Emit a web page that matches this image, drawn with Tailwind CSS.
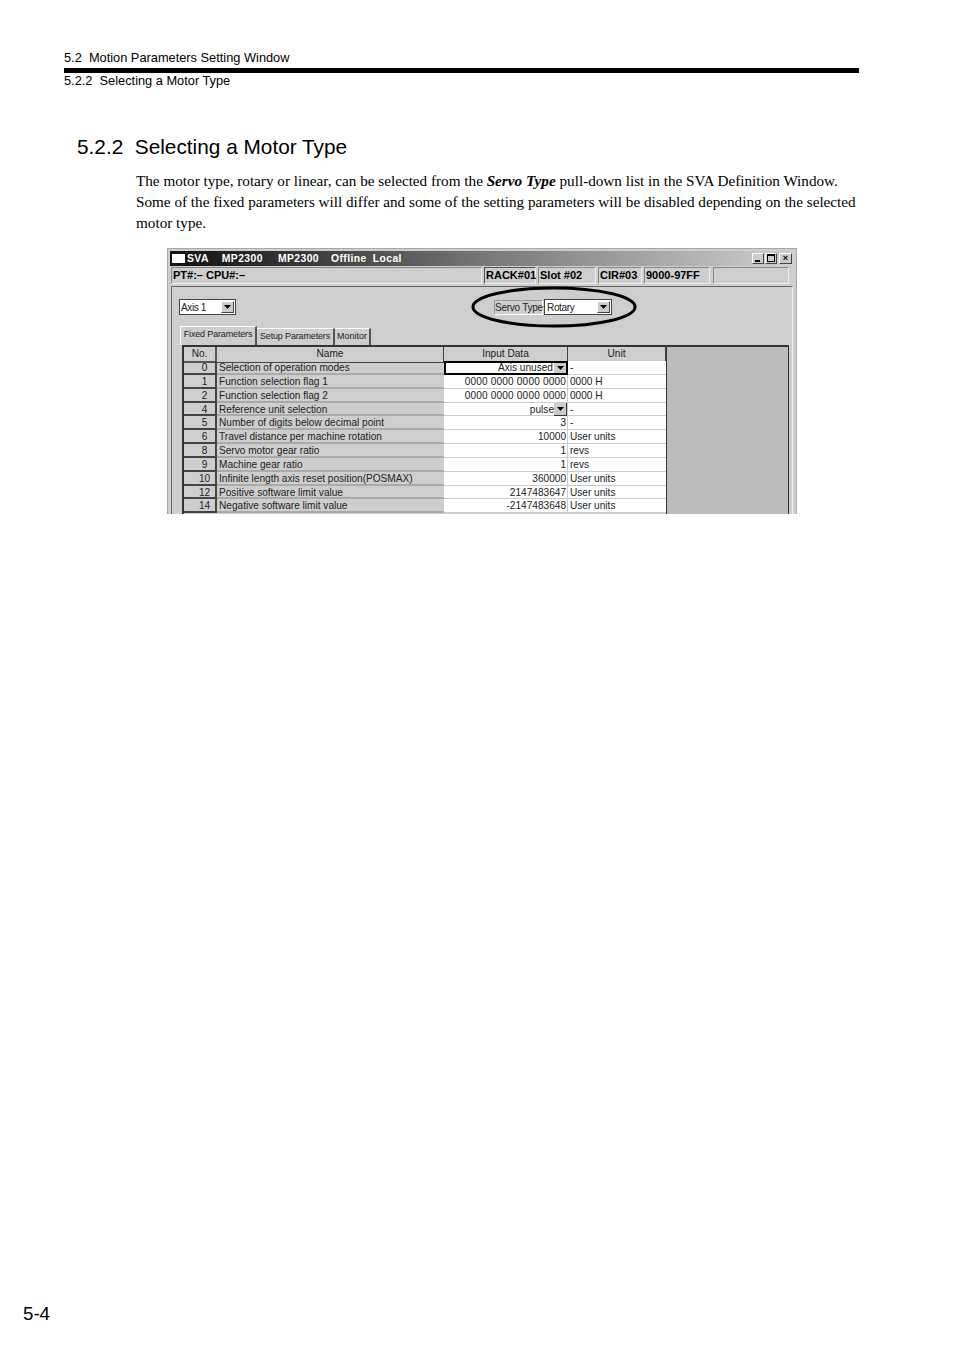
<!DOCTYPE html>
<html lang="en">
<head>
<meta charset="UTF-8">
<title>5.2.2 Selecting a Motor Type</title>
<script src="https://cdn.jsdelivr.net/npm/@tailwindcss/browser@4"></script>
</head>
<body class="bg-white text-black font-['Liberation_Sans',sans-serif] overflow-hidden">
<div class="relative w-[954px] h-[1350px] flex flex-col">

  <!-- running header -->
  <header class="ml-[64px] mr-[95px] pt-[50px] text-[12.8px] leading-[15px]">
    <div>5.2&nbsp; Motion Parameters Setting Window</div>
    <div class="h-[5px] bg-black mt-[3px]"></div>
    <div class="leading-[15px]">5.2.2&nbsp; Selecting a Motor Type</div>
  </header>

  <h1 class="ml-[77px] mt-[47px] text-[20.8px] leading-[24px]">5.2.2&nbsp; Selecting a Motor Type</h1>

  <p class="ml-[136px] mr-[95px] mt-[11px] font-['Liberation_Serif',serif] text-[15.2px] leading-[21px]">The motor type, rotary or linear, can be selected from the <b><i>Servo Type</i></b> pull-down list in the SVA Definition Window. Some of the fixed parameters will differ and some of the setting parameters will be disabled depending on the selected motor type.</p>

  <!-- SVA window screenshot -->
  <div class="relative ml-[167px] mt-[15px] w-[630px] h-[266px] overflow-hidden bg-[#cecece] border-x border-t border-[#a8a8a8] text-[#222] text-[10.1px] leading-[13px]">

    <div class="flex items-center h-[15px] mx-[2px] mt-[2px] pl-[2px] pr-[2px] bg-linear-to-r from-[#111] via-[#777] to-[#d0d0d0] text-white font-bold text-[10.4px] tracking-[0.4px]">
      <span class="w-[13px] h-[9px] bg-white mr-px"></span>
      <span class="ml-px">SVA</span>
      <span class="ml-[13px]">MP2300</span>
      <span class="ml-[15px]">MP2300</span>
      <span class="ml-[12px]">Offline</span>
      <span class="ml-[6px]">Local</span>
      <div class="ml-auto flex gap-px text-black">
        <span class="w-[12px] h-[11px] bg-[#ccc] border border-[#444] border-l-white border-t-white relative"><span class="absolute left-[2px] bottom-[1px] w-[5px] h-[2px] bg-black"></span></span>
        <span class="w-[12px] h-[11px] mr-px bg-[#ccc] border border-[#444] border-l-white border-t-white relative"><span class="absolute left-[1px] top-[0px] w-[8px] h-[8px] border border-black border-t-2"></span></span>
        <span class="w-[13px] h-[11px] bg-[#ccc] border border-[#444] border-l-white border-t-white flex items-center justify-center text-[9px] leading-[9px]">×</span>
      </div>
    </div>

    <div class="flex h-[17px] mx-[3px] mt-[1px] gap-[2px] text-[11px] font-bold text-black leading-[15px]">
      <div class="w-[311px] border border-[#888] border-b-[#eee] border-r-[#eee] pl-px">PT#:– CPU#:–</div>
      <div class="w-[52px] border border-[#555] border-b-[#eee] border-r-[#eee] pl-px">RACK#01</div>
      <div class="w-[58px] border border-[#888] border-b-[#eee] border-r-[#eee] pl-px">Slot #02</div>
      <div class="w-[44px] border border-[#888] border-b-[#eee] border-r-[#eee] pl-px">CIR#03</div>
      <div class="w-[66px] border border-[#888] border-b-[#eee] border-r-[#eee] pl-px">9000-97FF</div>
      <div class="w-[76px] ml-[1px] border border-[#888] border-b-[#eee] border-r-[#eee]"></div>
    </div>

    <div class="mx-[3px] mt-[2px] h-[233px] border-t border-l border-[#666] border-r border-r-[#eee] pt-[12px] pl-[7px]">
      <div class="flex items-center h-[16px]">
        <div class="flex items-center w-[57px] h-[16px] bg-white border border-[#444] pl-px pr-px">
          <span class="tracking-[-0.4px]">Axis 1</span>
          <span class="ml-auto w-[13px] h-[12px] bg-[#ccc] border border-[#444] border-l-white border-t-white flex items-center justify-center"><svg width="7" height="4" viewBox="0 0 7 4"><path d="M0 0h7L3.500 4z" fill="#000"/></svg></span>
        </div>
        <div class="flex items-center ml-[258px] h-[16px]">
          <div class="w-[49px] h-[15px] border border-[#999] border-b-white border-r-white text-center tracking-[-0.3px] whitespace-nowrap">Servo Type</div>
          <div class="flex items-center w-[68px] h-[16px] ml-px bg-white border border-[#444] pl-[2px] pr-px">
            <span class="tracking-[-0.4px]">Rotary</span>
            <span class="ml-auto w-[13px] h-[12px] bg-[#ccc] border border-[#444] border-l-white border-t-white flex items-center justify-center"><svg width="7" height="4" viewBox="0 0 7 4"><path d="M0 0h7L3.500 4z" fill="#000"/></svg></span>
          </div>
        </div>
      </div>

      <div class="flex items-start h-[19px] mt-[11px] ml-px text-[9px] leading-[13px]">
        <div class="h-[19px] w-[77px] pt-px border-t border-l border-white border-r-2 border-r-[#555] text-center tracking-[-0.15px] whitespace-nowrap">Fixed Parameters</div>
        <div class="h-[17px] mt-[2px] w-[78px] pt-px border-t border-white border-r-2 border-r-[#555] text-center tracking-[-0.15px] whitespace-nowrap">Setup Parameters</div>
        <div class="h-[17px] mt-[2px] w-[36px] pt-px border-t border-white border-r-2 border-r-[#555] text-center">Monitor</div>
      </div>

      <!-- parameter table -->
      <div class="flex w-[607px] ml-[3px] border-t-2 border-l-2 border-[#333]">
        <div class="w-[482px] shrink-0">
          <div class="grid grid-cols-[33px_227px_124px_98px] h-[14px] leading-[14px] text-center">
            <div class="border-r-2 border-b-2 border-[#555]">No.</div>
            <div class="border-r border-b border-[#444]">Name</div>
            <div class="border-r border-b border-[#444]">Input Data</div>
            <div class="border-r border-b border-[#444]">Unit</div>
          </div>
          <div class="grid grid-cols-[33px_227px_124px_98px] auto-rows-[13.850px] leading-[13px]">
            <div class="border-b-2 border-r-2 border-[#444] text-center pl-[10px]">0</div><div class="border-b-2 border-[#aaa] pl-[2px] overflow-hidden">Selection of operation modes</div><div class="relative bg-white border-2 border-black flex justify-end items-center pr-[13px]">Axis unused<span class="absolute right-0 top-0 w-[12px] h-[10px] bg-[#ccc] flex items-center justify-center"><svg width="7" height="4" viewBox="0 0 7 4"><path d="M0 0h7L3.500 4z" fill="#000"/></svg></span></div><div class="bg-white border-b border-[#ccc] pl-[2px]">-</div>
            <div class="border-b-2 border-r-2 border-[#444] text-center pl-[10px]">1</div><div class="border-b-2 border-[#aaa] pl-[2px]">Function selection flag 1</div><div class="bg-white border-b border-r border-[#ccc] text-right pr-px tracking-[0.16px]">0000 0000 0000 0000</div><div class="bg-white border-b border-[#ccc] pl-[2px]">0000 H</div>
            <div class="border-b-2 border-r-2 border-[#444] text-center pl-[10px]">2</div><div class="border-b-2 border-[#aaa] pl-[2px]">Function selection flag 2</div><div class="bg-white border-b border-r border-[#ccc] text-right pr-px tracking-[0.16px]">0000 0000 0000 0000</div><div class="bg-white border-b border-[#ccc] pl-[2px]">0000 H</div>
            <div class="border-b-2 border-r-2 border-[#444] text-center pl-[10px]">4</div><div class="border-b-2 border-[#aaa] pl-[2px]">Reference unit selection</div><div class="relative bg-white border-b border-r border-[#ccc] flex justify-end pr-[13px]">pulse<span class="absolute right-0 top-0 w-[13px] h-[13px] bg-[#ccc] border-r border-b border-[#333] flex items-center justify-center"><svg width="7" height="4" viewBox="0 0 7 4"><path d="M0 0h7L3.500 4z" fill="#000"/></svg></span></div><div class="bg-white border-b border-[#ccc] pl-[2px]">-</div>
            <div class="border-b-2 border-r-2 border-[#444] text-center pl-[10px]">5</div><div class="border-b-2 border-[#aaa] pl-[2px]">Number of digits below decimal point</div><div class="bg-white border-b border-r border-[#ccc] text-right pr-px">3</div><div class="bg-white border-b border-[#ccc] pl-[2px]">-</div>
            <div class="border-b-2 border-r-2 border-[#444] text-center pl-[10px]">6</div><div class="border-b-2 border-[#aaa] pl-[2px]">Travel distance per machine rotation</div><div class="bg-white border-b border-r border-[#ccc] text-right pr-px">10000</div><div class="bg-white border-b border-[#ccc] pl-[2px]">User units</div>
            <div class="border-b-2 border-r-2 border-[#444] text-center pl-[10px]">8</div><div class="border-b-2 border-[#aaa] pl-[2px]">Servo motor gear ratio</div><div class="bg-white border-b border-r border-[#ccc] text-right pr-px">1</div><div class="bg-white border-b border-[#ccc] pl-[2px]">revs</div>
            <div class="border-b-2 border-r-2 border-[#444] text-center pl-[10px]">9</div><div class="border-b-2 border-[#aaa] pl-[2px]">Machine gear ratio</div><div class="bg-white border-b border-r border-[#ccc] text-right pr-px">1</div><div class="bg-white border-b border-[#ccc] pl-[2px]">revs</div>
            <div class="border-b-2 border-r-2 border-[#444] text-center pl-[10px]">10</div><div class="border-b-2 border-[#aaa] pl-[2px]">Infinite length axis reset position(POSMAX)</div><div class="bg-white border-b border-r border-[#ccc] text-right pr-px">360000</div><div class="bg-white border-b border-[#ccc] pl-[2px]">User units</div>
            <div class="border-b-2 border-r-2 border-[#444] text-center pl-[10px]">12</div><div class="border-b-2 border-[#aaa] pl-[2px]">Positive software limit value</div><div class="bg-white border-b border-r border-[#ccc] text-right pr-px">2147483647</div><div class="bg-white border-b border-[#ccc] pl-[2px]">User units</div>
            <div class="border-b-2 border-r-2 border-[#444] text-center pl-[10px]">14</div><div class="border-b-2 border-[#aaa] pl-[2px]">Negative software limit value</div><div class="bg-white border-b border-r border-[#ccc] text-right pr-px">-2147483648</div><div class="bg-white border-b border-[#ccc] pl-[2px]">User units</div>
          </div>
        </div>
        <div class="w-[123px] h-[190px] bg-[#bcbcbc] border-l border-r border-[#333]"></div>
      </div>
    </div>

    <!-- hand drawn ellipse over the Servo Type field -->
    <svg class="absolute left-[302px] top-[36px]" width="168" height="44" viewBox="0 0 168 44"><ellipse cx="84" cy="22" rx="81" ry="19" fill="none" stroke="#000" stroke-width="3"/></svg>
  </div>

  <div class="absolute left-[23px] top-[1302px] text-[18.700px] leading-[23px]">5-4</div>
</div>
</body>
</html>
